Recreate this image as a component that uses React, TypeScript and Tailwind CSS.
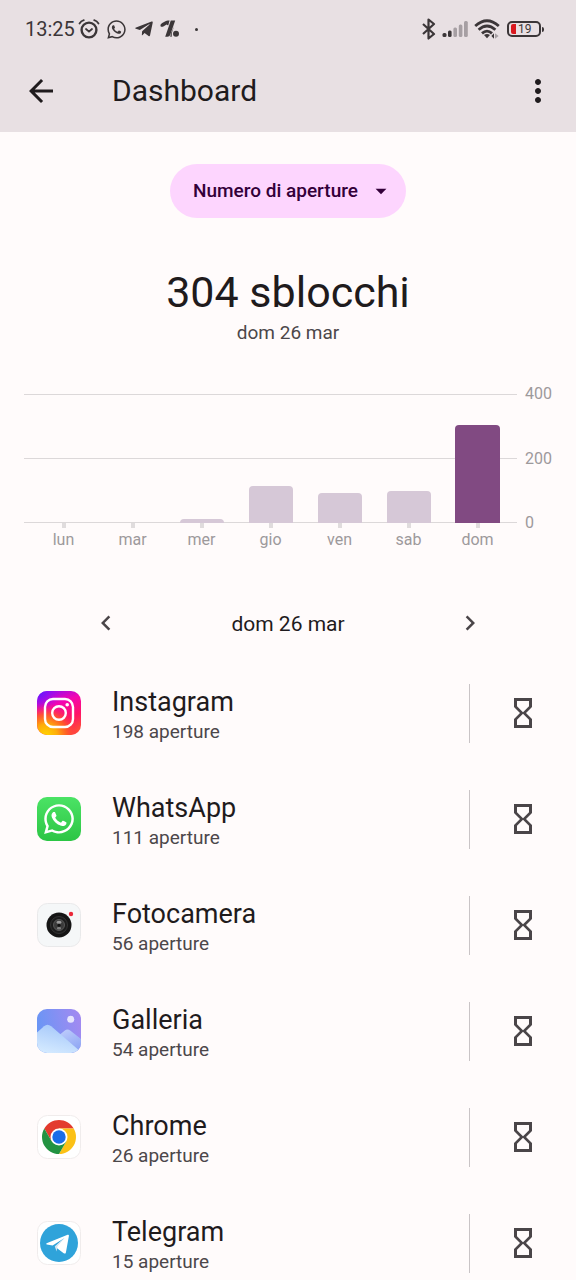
import React from 'react';
import { FaTelegramPlane, FaWhatsapp } from 'react-icons/fa';
import { MdArrowBack, MdArrowDropDown, MdChevronLeft, MdChevronRight, MdHourglassEmpty, MdMoreVert } from 'react-icons/md';

const MAX_VALUE = 400;

const days = [
  { label: 'lun', value: 0 },
  { label: 'mar', value: 0 },
  { label: 'mer', value: 11 },
  { label: 'gio', value: 115 },
  { label: 'ven', value: 94 },
  { label: 'sab', value: 100 },
  { label: 'dom', value: 304, active: true },
];

const InstagramIcon = () => (
  <svg viewBox="0 0 44 44" className="size-11">
    <defs>
      <linearGradient id="ig-base" x1="0.2" y1="0" x2="0.6" y2="1">
        <stop offset="0" stopColor="#8a10f5" />
        <stop offset="0.35" stopColor="#f405b0" />
        <stop offset="0.7" stopColor="#ff1466" />
        <stop offset="1" stopColor="#ff4a3a" />
      </linearGradient>
      <radialGradient id="ig-warm" cx="0.2" cy="1.02" r="0.75">
        <stop offset="0" stopColor="#ffd600" />
        <stop offset="0.35" stopColor="#ffac0a" />
        <stop offset="0.65" stopColor="#ff6022" stopOpacity="0.85" />
        <stop offset="1" stopColor="#ff1a60" stopOpacity="0" />
      </radialGradient>
      <radialGradient id="ig-cool" cx="0.03" cy="0" r="0.5">
        <stop offset="0" stopColor="#5a18ff" />
        <stop offset="1" stopColor="#b00af0" stopOpacity="0" />
      </radialGradient>
    </defs>
    <rect width="44" height="44" rx="10" fill="url(#ig-base)" />
    <rect width="44" height="44" rx="10" fill="url(#ig-cool)" />
    <rect width="44" height="44" rx="10" fill="url(#ig-warm)" />
    <rect x="8" y="8" width="28" height="28" rx="8" fill="none" stroke="#fff" strokeWidth="2.4" />
    <circle cx="22" cy="22" r="6.8" fill="none" stroke="#fff" strokeWidth="2.4" />
    <circle cx="30.2" cy="13.8" r="1.8" fill="#fff" />
  </svg>
);

const WhatsAppIcon = () => (
  <div className="flex size-11 items-center justify-center rounded-[10px] bg-gradient-to-b from-[#4be365] to-[#2bc544] text-white">
    <FaWhatsapp size={34} />
  </div>
);

const CameraIcon = () => (
  <svg viewBox="0 0 44 44" className="size-11">
    <rect x="0.5" y="0.5" width="43" height="43" rx="10" fill="#f5f7f8" stroke="#e9e9ea" />
    <circle cx="22" cy="22" r="12.5" fill="#151515" />
    <circle cx="22" cy="22" r="8.5" fill="#1c1c1c" stroke="#333" />
    <circle cx="22" cy="22" r="5.5" fill="#3a3a3a" stroke="#5c5c5c" strokeWidth="0.9" />
    <ellipse cx="22" cy="19.2" rx="2.6" ry="1.5" fill="#9a9a9a" />
    <ellipse cx="22" cy="25.2" rx="2.2" ry="1.3" fill="#808080" />
    <circle cx="22" cy="22.2" r="1.5" fill="#111" />
    <circle cx="34" cy="11" r="2.2" fill="#ea2839" />
  </svg>
);

const GalleryIcon = () => (
  <svg viewBox="0 0 44 44" className="size-11">
    <defs>
      <linearGradient id="sky" x1="0" y1="0.6" x2="1" y2="0.4">
        <stop offset="0" stopColor="#6796f5" />
        <stop offset="1" stopColor="#a18af1" />
      </linearGradient>
      <linearGradient id="front" x1="0.7" y1="0" x2="0.3" y2="1">
        <stop offset="0" stopColor="#a3c6fa" />
        <stop offset="1" stopColor="#d3e9ff" />
      </linearGradient>
      <linearGradient id="back" x1="0.3" y1="0" x2="0.8" y2="1">
        <stop offset="0" stopColor="#bccbfb" />
        <stop offset="1" stopColor="#8aa2f3" />
      </linearGradient>
      <clipPath id="gallery-clip">
        <rect width="44" height="44" rx="10" />
      </clipPath>
    </defs>
    <g clipPath="url(#gallery-clip)">
      <rect width="44" height="44" fill="url(#sky)" />
      <path d="M20 28l7.5-6.2q3-2.4 6 0L44 30v14H20z" fill="url(#back)" />
      <path d="M0 23.5l7-6.2q3.5-3 7.2 0L44 43v1H0z" fill="url(#front)" />
      <circle cx="33.7" cy="10.3" r="3.5" fill="#e6e5fd" />
    </g>
  </svg>
);

const ChromeIcon = () => (
  <svg viewBox="-22 -22 44 44" className="size-11">
    <rect x="-21.5" y="-21.5" width="43" height="43" rx="10" fill="#fff" stroke="#f0ecec" />
    <path d="M-14.72-8.5A17 17 0 0 1 14.72-8.5L0-8.5L-7.36 4.25Z" fill="#e33b2e" />
    <path d="M14.72-8.5A17 17 0 0 1 0 17L7.36 4.25L0-8.5Z" fill="#fbc116" />
    <path d="M0 17A17 17 0 0 1-14.72-8.5L-7.36 4.25L7.36 4.25Z" fill="#229342" />
    <circle r="8.5" fill="#fff" />
    <circle r="6.7" fill="#1a6ce8" />
  </svg>
);

const TelegramIcon = () => (
  <svg viewBox="0 0 44 44" className="size-11">
    <rect x="0.5" y="0.5" width="43" height="43" rx="10" fill="#fff" stroke="#f0ecec" />
    <circle cx="22" cy="22" r="19" fill="#2fa3da" />
    <path d="M9.6 22.2L30.6 13.8q1.6-.5 1.3 1.3L28.9 31.4q-.5 1.9-2.2.8L17.8 25.6L27.5 17L15.6 24.6L9.8 23.4q-1.2-.5-.2-1.2z" fill="#fff" />
    <path d="M17.8 25.6L27.5 17L20.4 25.3L19.6 30.4z" fill="#cfe3f1" />
  </svg>
);

const apps = [
  { name: 'Instagram', count: 198, Icon: InstagramIcon },
  { name: 'WhatsApp', count: 111, Icon: WhatsAppIcon },
  { name: 'Fotocamera', count: 56, Icon: CameraIcon },
  { name: 'Galleria', count: 54, Icon: GalleryIcon },
  { name: 'Chrome', count: 26, Icon: ChromeIcon },
  { name: 'Telegram', count: 15, Icon: TelegramIcon },
];

const StatusBar = () => (
  <div className="flex h-14 items-center justify-between pr-8 pl-[25px] pt-[2px] text-[#3b3638]">
    <div className="flex items-center">
      <span className="text-[20px] leading-6">13:25</span>
      {/* Alarm */}
      <svg viewBox="0 0 22 22" className="ml-[3px] size-[22px]" fill="none" stroke="currentColor" strokeLinecap="round">
        <circle cx="11" cy="12" r="7.4" strokeWidth="2.4" />
        <path d="M8 11l3 2.6 3-2.6" strokeWidth="1.8" />
        <path d="M1.5 5.5Q3 3 5.8 2.2M20.5 5.5Q19 3 16.2 2.2" strokeWidth="1.8" />
      </svg>
      <FaWhatsapp size={21} className="ml-[6px]" />
      <FaTelegramPlane size={20} className="ml-[7px]" />
      <svg viewBox="0 0 20 18" className="ml-[6px] h-[18px] w-5" fill="currentColor">
        <path d="M.4 6Q.2 4.2 2.2 3L5.4 1.2Q6.6.6 8 .6H9.6L8.2 5.4 6.6 4.6 3.8 6.2Q1.4 7.6.4 6z" />
        <path d="M10.8.6h4.4L10.4 14.6Q9.6 16.8 7.4 16.8H5.2z" />
        <path d="M14.2 6.2L12.6 10.6l-.9 3q.2-1.6 0 3.2h-1.5l1-4.2z" />
        <circle cx="16" cy="13.8" r="3" />
      </svg>
      <span className="ml-[15px] size-[3px] rounded-full bg-current" />
    </div>
    <div className="flex items-center">
      <svg viewBox="0 0 14 22" className="h-[22px] w-[14px]" fill="none" stroke="currentColor" strokeWidth="2.2" strokeLinejoin="round">
        <path d="M1 6l11 10-5.5 4.5v-19L12 6 1 16" />
      </svg>
      <svg viewBox="0 0 26 16" className="ml-[6px] h-4 w-[26px]" fill="currentColor">
        <rect x="0.5" y="12" width="4" height="4" rx="1.5" />
        <rect x="6" y="9.5" width="3.6" height="6.5" rx="1.5" />
        <g fill="#a69fa3">
          <rect x="11.4" y="6.5" width="3.6" height="9.5" rx="1.5" />
          <rect x="16.8" y="3.5" width="3.6" height="12.5" rx="1.5" />
          <rect x="22" y="0" width="3.8" height="16" rx="1.5" />
        </g>
      </svg>
      <svg viewBox="0 0 26 20" className="ml-[6px] h-5 w-[26px]" fill="none" stroke="currentColor" strokeWidth="2.8">
        <path d="M1.2 7Q13-3.4 24.8 7" />
        <path d="M4.6 10.8Q13 3.2 21.4 10.8" />
        <path d="M8 14.4Q13 9.8 18 14.4" />
        <path d="M13 19.2l-3-3.2q3-2.2 6 0z" fill="currentColor" stroke="none" />
        <path d="M20 14.2v5.6l-2.6-2.8z" fill="currentColor" stroke="none" />
        <path d="M21 14.2v5.6l3.6-2.8z" fill="#a69fa3" stroke="none" />
      </svg>
      <div className="ml-[7px] flex h-4 w-[34px] items-center gap-[2px] rounded-[5px] border-2 border-current pl-[2px]">
        <span className="h-[10px] w-[5px] rounded-l-[2px] bg-[#d9191f]" />
        <span className="text-[12px] leading-3">19</span>
      </div>
      <span className="ml-px h-[5px] w-[2px] rounded-r-sm bg-current" />
    </div>
  </div>
);

const Chart = () => (
  <div className="mx-6 mt-[49px] flex text-[16px] text-[#9d999b]">
    <div className="flex-1">
      <div className="relative h-[129px]">
        <div className="absolute inset-0 flex flex-col justify-between">
          <span className="h-px bg-[#dcd8d9]" />
          <span className="h-px bg-[#dcd8d9]" />
          <span className="h-px bg-[#dcd8d9]" />
        </div>
        <div className="relative grid h-full grid-cols-7 items-end px-[5px]">
          {days.map((day) => (
            <div
              key={day.label}
              className={day.active ? 'mx-auto w-[45px] rounded-t bg-[#814a82]' : 'mx-auto w-11 rounded-t bg-[#d6c8d7]'}
              style={{ height: `${(day.value / MAX_VALUE) * 100}%` }}
            />
          ))}
        </div>
      </div>
      <div className="grid grid-cols-7 px-[5px]">
        {days.map((day) => (
          <div key={day.label} className="flex flex-col items-center">
            <span className="h-[5px] w-1 bg-[#e0dcdd]" />
            <span className="mt-[2px] leading-5">{day.label}</span>
          </div>
        ))}
      </div>
    </div>
    <div className="-mt-2 flex h-[145px] w-[35px] flex-col justify-between pl-2 leading-4">
      <span>400</span>
      <span>200</span>
      <span>0</span>
    </div>
  </div>
);

const App: React.FC = () => {
  return (
    <div className="min-h-screen bg-[#fffbfb] font-['Roboto',sans-serif] text-[#1f1b1d]">
      <header className="bg-[#e8e0e3]">
        <StatusBar />
        <div className="flex h-[76px] items-start px-5 pt-[17px]">
          <button type="button" aria-label="Indietro" className="ml-[3px]">
            <MdArrowBack size={36} />
          </button>
          <h1 className="ml-[53px] flex-1 text-[30px] leading-9">Dashboard</h1>
          <button type="button" aria-label="Altre opzioni">
            <MdMoreVert size={36} />
          </button>
        </div>
      </header>

      <main>
        <div className="mt-8 flex justify-center">
          <div className="relative">
            <select
              aria-label="Dati mostrati"
              className="h-[54px] w-[236px] appearance-none rounded-full bg-[#fdd5fe] pt-px pl-[23px] text-[19px] font-medium text-[#330039]"
            >
              <option>Numero di aperture</option>
            </select>
            <MdArrowDropDown size={26} className="pointer-events-none absolute top-[14px] right-3 text-[#330039]" />
          </div>
        </div>

        <div className="mt-[49px] text-center">
          <h2 className="text-[43px] leading-[50px]">304 sblocchi</h2>
          <p className="mt-1 text-[19px] leading-6 text-[#4c474a]">dom 26 mar</p>
        </div>

        <Chart />

        <div className="mt-[55px] flex h-[36px] items-center justify-between px-[91px]">
          <button type="button" aria-label="Giorno precedente" className="text-[#4a4548]">
            <MdChevronLeft size={30} />
          </button>
          <span className="pt-1 text-[21px]">dom 26 mar</span>
          <button type="button" aria-label="Giorno successivo" className="text-[#4a4548]">
            <MdChevronRight size={30} />
          </button>
        </div>

        <ul className="mt-[19px]">
          {apps.map(({ name, count, Icon }) => (
            <li key={name} className="flex h-[106px] items-center pl-[37px]">
              <Icon />
              <div className="ml-[31px] flex-1 pt-[6px]">
                <h3 className="text-[27px] leading-8">{name}</h3>
                <p className="text-[19px] leading-7 text-[#4c474a]">{count} aperture</p>
              </div>
              <button
                type="button"
                aria-label={`Imposta timer per ${name}`}
                className="flex h-[59px] w-[107px] items-center justify-center border-l border-[#c9c4c6] text-[#4a4548]"
              >
                <MdHourglassEmpty size={36} />
              </button>
            </li>
          ))}
        </ul>
      </main>
    </div>
  );
};

export default App;
